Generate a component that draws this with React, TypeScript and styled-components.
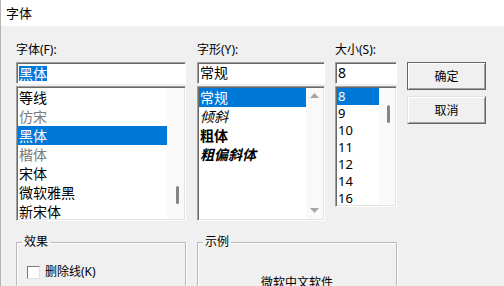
import React from 'react';
import styled, { createGlobalStyle } from 'styled-components';

const GlobalStyle = createGlobalStyle`
    html, body {
        margin: 0;
        padding: 0;
    }
    body {
        background: #f0f0f0;
        font-family: "Noto Sans", "Noto Sans CJK SC", sans-serif;
        font-size: 12px;
        color: #000;
        overflow: hidden;
    }
`;

const Window = styled.div`
    width: 504px;
    height: 286px;
    overflow: hidden;
    border-left: 1px solid #b4b4b4;
    box-sizing: border-box;
    background: #f0f0f0;
`;

const TitleBar = styled.div`
    height: 26px;
    background: #fff;
    display: flex;
    align-items: center;
    padding-left: 5px;
    font-size: 13px;
    line-height: 16px;
`;

const Body = styled.div`
    display: grid;
    grid-template-columns: 171px 128px 62px 79px;
    column-gap: 10px;
    row-gap: 14px;
    padding: 16px 0 0 15px;
`;

const Column = styled.div`
    display: flex;
    flex-direction: column;
`;

const FieldLabel = styled.div`
    height: 16px;
    line-height: 16px;
    font-size: 12px;
    margin-bottom: 4px;
    white-space: nowrap;
`;

const TextBox = styled.div<{ $width?: number }>`
    box-sizing: border-box;
    width: ${p => (p.$width ? `${p.$width}px` : '100%')};
    height: 22px;
    background: #fff;
    border: 1px solid;
    border-color: #a0a0a0 #fff #fff #a0a0a0;
    box-shadow: inset 1px 1px 0 #696969;
    display: flex;
    align-items: center;
    padding-left: 2px;
    font-size: 14px;
    line-height: 16px;
    margin-bottom: 2px;
`;

const Selection = styled.span`
    background: #0078d7;
    color: #fff;
    line-height: 15px;
`;

const ListBox = styled.div<{ $height: number; $width?: number }>`
    box-sizing: border-box;
    width: ${p => (p.$width ? `${p.$width}px` : '100%')};
    height: ${p => p.$height}px;
    background: #fff;
    border: 1px solid;
    border-color: #a0a0a0 #fff #fff #a0a0a0;
    box-shadow: inset 1px 1px 0 #696969, inset -1px -1px 0 #e3e3e3;
    padding: 1px;
    display: flex;
    overflow: hidden;
`;

const Items = styled.div`
    flex: 1;
    min-width: 0;
`;

const Item = styled.div<{
    $h: number;
    $size?: number;
    $selected?: boolean;
    $muted?: boolean;
    $italic?: boolean;
    $bold?: boolean;
}>`
    height: ${p => p.$h}px;
    line-height: ${p => p.$h}px;
    font-size: ${p => p.$size ?? 14}px;
    padding-left: 1px;
    white-space: nowrap;
    overflow: hidden;
    background: ${p => (p.$selected ? '#0078d7' : 'transparent')};
    color: ${p => (p.$selected ? '#fff' : p.$muted ? '#7d7d7d' : '#000')};
    font-style: ${p => (p.$italic ? 'italic' : 'normal')};
    font-weight: ${p => (p.$bold ? 700 : 400)};
`;

const ScrollTrack = styled.div<{ $width: number; $spread?: boolean }>`
    width: ${p => p.$width}px;
    flex-shrink: 0;
    background: #f9f9f9;
    display: flex;
    flex-direction: column;
    align-items: center;
    justify-content: ${p => (p.$spread ? 'space-between' : 'flex-start')};
    padding: ${p => (p.$spread ? '5px 0 6px' : '0')};
`;

const Thumb = styled.div<{ $top: number; $height: number }>`
    width: 3px;
    height: ${p => p.$height}px;
    margin-top: ${p => p.$top}px;
    margin-left: 3px;
    background: #858585;
    border-radius: 2px;
`;

const ButtonStack = styled.div`
    display: flex;
    flex-direction: column;
    gap: 6px;
    padding-top: 20px;
`;

const DialogButton = styled.button<{ $default?: boolean }>`
    box-sizing: border-box;
    width: 79px;
    height: 28px;
    background: #f0f0f0;
    border: 1px solid;
    border-color: ${p => (p.$default ? '#646464' : '#e3e3e3 #646464 #646464 #e3e3e3')};
    box-shadow: inset 1px 1px 0 #fff, inset -1px -1px 0 #a0a0a0;
    font-family: "Noto Sans CJK SC", sans-serif;
    font-size: 12px;
    line-height: 16px;
    color: #000;
    padding: 0;
`;

const GroupBox = styled.fieldset<{ $span?: string; $width: number }>`
    grid-column: ${p => p.$span || 'auto'};
    box-sizing: border-box;
    width: ${p => p.$width}px;
    height: 70px;
    margin: 0;
    padding: 0 10px;
    border: 1px solid #b9b9b9;
    box-shadow: inset 1px 1px 0 #fff, 1px 1px 0 #fff;
    min-width: 0;
`;

const GroupTitle = styled.legend`
    margin-left: -5px;
    padding: 0 2px;
    font-size: 12px;
    line-height: 14px;
`;

const CheckRow = styled.label`
    display: flex;
    align-items: center;
    gap: 5px;
    margin-top: 16px;
    font-size: 12px;
    line-height: 14px;
`;

const CheckBox = styled.span`
    box-sizing: border-box;
    width: 13px;
    height: 13px;
    background: #fff;
    border: 1px solid;
    border-color: #7a7a7a #e3e3e3 #e3e3e3 #7a7a7a;
`;

const SampleText = styled.div`
    margin-top: 26px;
    text-align: center;
    font-family: "Noto Sans CJK SC", sans-serif;
    font-size: 12px;
    line-height: 14px;
`;

const Arrow: React.FC<{ up?: boolean }> = ({ up }) => (
    <svg width="9" height="5" viewBox="0 0 9 5">
        <polygon points={up ? '0,5 9,5 4.5,0' : '0,0 9,0 4.5,5'} fill="#a6a6a6" />
    </svg>
);

const fonts = [
    { name: '等线' },
    { name: '仿宋', muted: true },
    { name: '黑体', selected: true },
    { name: '楷体', muted: true },
    { name: '宋体' },
    { name: '微软雅黑' },
    { name: '新宋体' },
];

const styles = [
    { name: '常规', selected: true },
    { name: '倾斜', italic: true },
    { name: '粗体', bold: true },
    { name: '粗偏斜体', bold: true, italic: true },
];

const sizes = ['8', '9', '10', '11', '12', '14', '16'];

export default function App() {
    return (
        <Window>
            <GlobalStyle />
            <TitleBar>字体</TitleBar>
            <Body>
                <Column>
                    <FieldLabel>字体(F):</FieldLabel>
                    <TextBox $width={170}>
                        <Selection>黑体</Selection>
                    </TextBox>
                    <ListBox $height={135} $width={170}>
                        <Items>
                            {fonts.map(f => (
                                <Item key={f.name} $h={19} $selected={f.selected} $muted={f.muted}>
                                    {f.name}
                                </Item>
                            ))}
                        </Items>
                        <ScrollTrack $width={17}>
                            <Thumb $top={98} $height={18} />
                        </ScrollTrack>
                    </ListBox>
                </Column>

                <Column>
                    <FieldLabel>字形(Y):</FieldLabel>
                    <TextBox>常规</TextBox>
                    <ListBox $height={135}>
                        <Items>
                            {styles.map(s => (
                                <Item
                                    key={s.name}
                                    $h={19}
                                    $selected={s.selected}
                                    $italic={s.italic}
                                    $bold={s.bold}
                                >
                                    {s.name}
                                </Item>
                            ))}
                        </Items>
                        <ScrollTrack $width={17} $spread>
                            <Arrow up />
                            <Arrow />
                        </ScrollTrack>
                    </ListBox>
                </Column>

                <Column>
                    <FieldLabel>大小(S):</FieldLabel>
                    <TextBox>8</TextBox>
                    <ListBox $height={121}>
                        <Items>
                            {sizes.map((s, i) => (
                                <Item key={s} $h={17} $size={13} $selected={i === 0}>
                                    {s}
                                </Item>
                            ))}
                        </Items>
                        <ScrollTrack $width={16}>
                            <Thumb $top={17} $height={18} />
                        </ScrollTrack>
                    </ListBox>
                </Column>

                <ButtonStack>
                    <DialogButton $default>确定</DialogButton>
                    <DialogButton>取消</DialogButton>
                </ButtonStack>

                <GroupBox $width={170}>
                    <GroupTitle>效果</GroupTitle>
                    <CheckRow>
                        <CheckBox />
                        删除线(K)
                    </CheckRow>
                </GroupBox>

                <GroupBox $span="2 / 4" $width={200}>
                    <GroupTitle>示例</GroupTitle>
                    <SampleText>微软中文软件</SampleText>
                </GroupBox>
            </Body>
        </Window>
    );
}
